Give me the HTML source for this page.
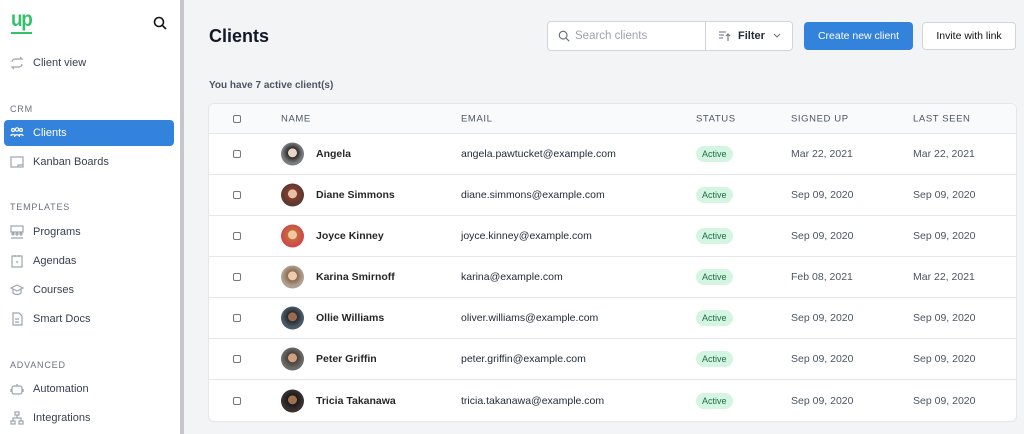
<!DOCTYPE html>
<html><head><meta charset="utf-8"><style>
*{box-sizing:border-box;margin:0;padding:0}
body{width:1024px;height:434px;overflow:hidden;font-family:"Liberation Sans",sans-serif;background:#f3f4f6;position:relative;color:#111827}
.sb{position:absolute;left:0;top:0;width:180px;height:434px;background:#fff}
.bar{position:absolute;left:180px;top:0;width:4px;height:434px;background:#c4c6c9}
.logo{position:absolute;left:11px;top:10px;line-height:20px;color:#34c26b;font-weight:bold;font-size:21px;letter-spacing:-1.5px;transform:scaleX(.9);transform-origin:left}
.logoline{position:absolute;left:11px;top:32px;width:21px;height:2px;background:#34c26b}
.nav{position:absolute;left:10px;font-size:11px;color:#374151;display:flex;align-items:center}
.nav svg{width:14px;height:14px;margin-right:9px;stroke:#9ca3af;fill:none;stroke-width:1.2}
.sec{position:absolute;left:10px;font-size:9px;color:#6b7280;letter-spacing:.8px}
.act{position:absolute;left:4px;top:120px;width:170px;height:26px;background:#3382dc;border-radius:4px}
h1{position:absolute;left:209px;top:26px;font-size:18px;font-weight:bold;color:#111827}
.sub{position:absolute;left:209px;top:80px;font-size:10px;font-weight:bold;color:#4b5563}
.search{position:absolute;left:547px;top:21px;width:246px;height:30px;background:#fff;border:1px solid #d1d5db;border-radius:4px;font-size:11.5px;color:#9ca3af}
.btn{position:absolute;top:22px;height:28px;border-radius:4px;font-size:10.5px;display:flex;align-items:center;justify-content:center}
.card{position:absolute;left:209px;top:104px;width:807px;height:317px;background:#fff;border-radius:5px;box-shadow:0 0 0 1px #e5e7eb,0 1px 2px rgba(0,0,0,.06);overflow:hidden}
.hd{height:30px;background:#f9fafb;border-bottom:1px solid #e5e7eb;position:relative;font-size:9.5px;color:#4b5563;letter-spacing:.6px}
.row{height:41px;border-bottom:1px solid #e5e7eb;position:relative;font-size:10.5px;color:#1f2937}
.row:last-child{border-bottom:none}
.row b{font-weight:bold;color:#27272a;font-size:10.5px}
.c{position:absolute;top:50%;transform:translateY(-50%)}
.cb{width:8px;height:8px;border:1px solid #777;border-radius:2px;left:24px}
.av{width:23px;height:23px;border-radius:50%;left:72px}
.badge{background:#d5f5e3;color:#1f6b45;font-size:9px;padding:3px 6px;border-radius:8px}
</style></head><body>
<div class="sb">
<div class="logo">up</div><div class="logoline"></div>
<svg style="position:absolute;left:153px;top:16px" width="14" height="14" viewBox="0 0 14 14" fill="none" stroke="#111" stroke-width="1.6"><circle cx="6" cy="6" r="4.5"/><path d="M9.3 9.3L13 13"/></svg>
<div class="nav" style="top:56px"><svg viewBox="0 0 14 14"><path d="M2 6a3 3 0 0 1 3-3h7l-2-2M12 8a3 3 0 0 1-3 3H2l2 2"/></svg>Client view</div>
<div class="sec" style="top:104px">CRM</div>
<div class="act"></div>
<div class="nav" style="top:126px;color:#fff"><svg viewBox="0 0 14 14" style="stroke:#fff"><circle cx="3" cy="4" r="1.5"/><circle cx="7" cy="3.5" r="1.7"/><circle cx="11" cy="4" r="1.5"/><path d="M1 10c0-2 4-2 4 0M4.5 11c0-3 5-3 5 0M9 10c0-2 4-2 4 0"/></svg>Clients</div>
<div class="nav" style="top:155px"><svg viewBox="0 0 14 14"><rect x="1" y="2" width="12" height="10"/><path d="M8 12v-2h5"/></svg>Kanban Boards</div>
<div class="sec" style="top:202px">TEMPLATES</div>
<div class="nav" style="top:225px"><svg viewBox="0 0 14 14"><rect x="1" y="1" width="12" height="6"/><circle cx="3" cy="9" r="1"/><circle cx="7" cy="9" r="1"/><circle cx="11" cy="9" r="1"/><path d="M1 13h4M5 13h4M9 13h4"/></svg>Programs</div>
<div class="nav" style="top:254px"><svg viewBox="0 0 14 14"><rect x="2" y="2" width="10" height="11"/><path d="M5 1v2M9 1v2M6 8h2"/></svg>Agendas</div>
<div class="nav" style="top:283px"><svg viewBox="0 0 14 14"><path d="M1 5l6-3 6 3-6 3zM3 6v4c2 2 6 2 8 0V6"/></svg>Courses</div>
<div class="nav" style="top:312px"><svg viewBox="0 0 14 14"><path d="M3 1h6l3 3v9H3zM5 7h4M5 10h4"/></svg>Smart Docs</div>
<div class="sec" style="top:360px">ADVANCED</div>
<div class="nav" style="top:382px"><svg viewBox="0 0 14 14"><rect x="2" y="4" width="10" height="8" rx="2"/><path d="M7 2v2M5 8h.1M9 8h.1M1 7v3M13 7v3"/></svg>Automation</div>
<div class="nav" style="top:411px"><svg viewBox="0 0 14 14"><rect x="5" y="1" width="4" height="3"/><rect x="1" y="10" width="4" height="3"/><rect x="9" y="10" width="4" height="3"/><path d="M7 4v3M3 10V7h8v3"/></svg>Integrations</div>
</div>
<div class="bar"></div>
<h1>Clients</h1>
<div class="search">
<svg style="position:absolute;left:10px;top:8px" width="12" height="12" viewBox="0 0 14 14" fill="none" stroke="#6b7280" stroke-width="1.4"><circle cx="6" cy="6" r="4.5"/><path d="M9.3 9.3L13 13"/></svg>
<span style="position:absolute;left:27px;top:8px">Search clients</span>
<div style="position:absolute;left:157px;top:0;width:1px;height:28px;background:#d1d5db"></div>
<svg style="position:absolute;left:171px;top:9px" width="12" height="11" viewBox="0 0 12 11" fill="none" stroke="#6b7280" stroke-width="1.1"><path d="M0 1h7M0 4h5M0 7h4M9 10V3M7 5l2-2 2 2"/></svg>
<span style="position:absolute;left:190px;top:8px;color:#1f2937;font-weight:bold;font-size:11px">Filter</span>
<svg style="position:absolute;left:225px;top:11px" width="8" height="6" viewBox="0 0 8 6" fill="none" stroke="#6b7280" stroke-width="1.1"><path d="M1 1l3 3 3-3"/></svg>
</div>
<div class="btn" style="left:804px;width:109px;background:#3382dc;color:#fff">Create new client</div>
<div class="btn" style="left:922px;width:94px;background:#fff;border:1px solid #d1d5db;color:#111">Invite with link</div>
<div class="sub">You have 7 active client(s)</div>
<div class="card">
<div class="hd"><div class="c cb"></div><span class="c" style="left:72px">NAME</span><span class="c" style="left:252px">EMAIL</span><span class="c" style="left:487px">STATUS</span><span class="c" style="left:582px">SIGNED UP</span><span class="c" style="left:704px">LAST SEEN</span></div>
<div class="row"><div class="c cb"></div><div class="c av" style="background:radial-gradient(circle at 50% 45%,#e8d4c8 0 25%,#2d2a2a 27%,#7a7d80 60%)"></div><b class="c" style="left:107px">Angela</b><span class="c" style="left:252px">angela.pawtucket@example.com</span><span class="c badge" style="left:487px">Active</span><span class="c" style="left:582px;color:#4b5563">Mar 22, 2021</span><span class="c" style="left:704px;color:#4b5563">Mar 22, 2021</span></div>
<div class="row"><div class="c cb"></div><div class="c av" style="background:radial-gradient(circle at 50% 45%,#e7c0a8 0 25%,#8a3a2a 27%,#5a3a32 60%)"></div><b class="c" style="left:107px">Diane Simmons</b><span class="c" style="left:252px">diane.simmons@example.com</span><span class="c badge" style="left:487px">Active</span><span class="c" style="left:582px;color:#4b5563">Sep 09, 2020</span><span class="c" style="left:704px;color:#4b5563">Sep 09, 2020</span></div>
<div class="row"><div class="c cb"></div><div class="c av" style="background:radial-gradient(circle at 50% 45%,#f0c8a0 0 25%,#c0703a 27%,#d04a4a 60%)"></div><b class="c" style="left:107px">Joyce Kinney</b><span class="c" style="left:252px">joyce.kinney@example.com</span><span class="c badge" style="left:487px">Active</span><span class="c" style="left:582px;color:#4b5563">Sep 09, 2020</span><span class="c" style="left:704px;color:#4b5563">Sep 09, 2020</span></div>
<div class="row"><div class="c cb"></div><div class="c av" style="background:radial-gradient(circle at 50% 45%,#eccab0 0 25%,#8a6a50 27%,#b0a090 60%)"></div><b class="c" style="left:107px">Karina Smirnoff</b><span class="c" style="left:252px">karina@example.com</span><span class="c badge" style="left:487px">Active</span><span class="c" style="left:582px;color:#4b5563">Feb 08, 2021</span><span class="c" style="left:704px;color:#4b5563">Mar 22, 2021</span></div>
<div class="row"><div class="c cb"></div><div class="c av" style="background:radial-gradient(circle at 50% 45%,#9a6a50 0 25%,#2a2a2a 27%,#4a5a6a 60%)"></div><b class="c" style="left:107px">Ollie Williams</b><span class="c" style="left:252px">oliver.williams@example.com</span><span class="c badge" style="left:487px">Active</span><span class="c" style="left:582px;color:#4b5563">Sep 09, 2020</span><span class="c" style="left:704px;color:#4b5563">Sep 09, 2020</span></div>
<div class="row"><div class="c cb"></div><div class="c av" style="background:radial-gradient(circle at 50% 45%,#d0a080 0 25%,#4a4038 27%,#6a6a6a 60%)"></div><b class="c" style="left:107px">Peter Griffin</b><span class="c" style="left:252px">peter.griffin@example.com</span><span class="c badge" style="left:487px">Active</span><span class="c" style="left:582px;color:#4b5563">Sep 09, 2020</span><span class="c" style="left:704px;color:#4b5563">Sep 09, 2020</span></div>
<div class="row"><div class="c cb"></div><div class="c av" style="background:radial-gradient(circle at 50% 45%,#a07050 0 25%,#1a1a1a 27%,#3a3030 60%)"></div><b class="c" style="left:107px">Tricia Takanawa</b><span class="c" style="left:252px">tricia.takanawa@example.com</span><span class="c badge" style="left:487px">Active</span><span class="c" style="left:582px;color:#4b5563">Sep 09, 2020</span><span class="c" style="left:704px;color:#4b5563">Sep 09, 2020</span></div>
</div>
</body></html>
